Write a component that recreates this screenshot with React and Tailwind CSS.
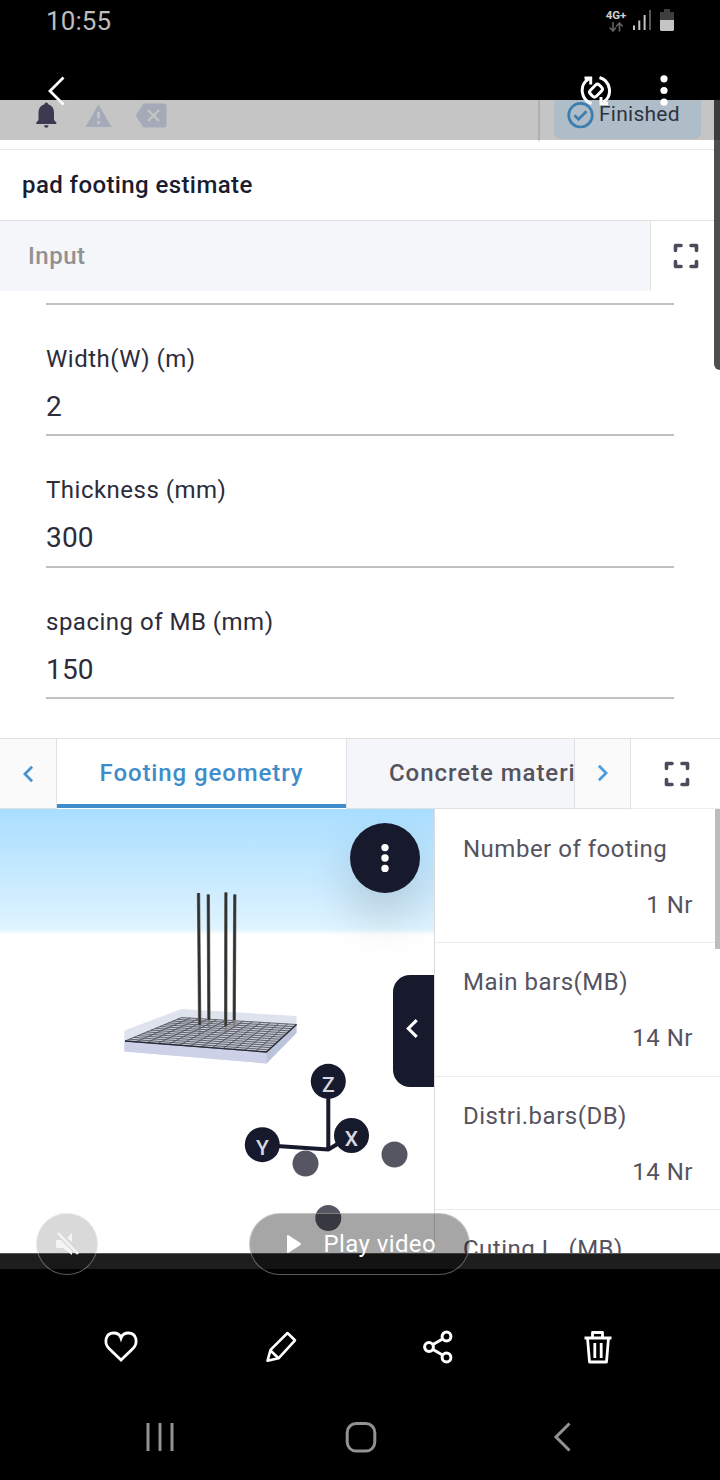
import React from 'react'

const fields = [
  { label: 'Width(W) (m)', value: '2' },
  { label: 'Thickness (mm)', value: '300' },
  { label: 'spacing of MB (mm)', value: '150' },
]

const results = [
  { label: 'Number of footing', value: '1 Nr' },
  { label: 'Main bars(MB)', value: '14 Nr' },
  { label: 'Distri.bars(DB)', value: '14 Nr' },
]

const ExpandIcon = () => (
  <svg width="26" height="26" viewBox="0 0 26 26" fill="none" stroke="#4c4a5b" strokeWidth="3.600" strokeLinejoin="round" strokeLinecap="round">
    <path d="M2.500 7.500V2.500H8M18 2.500H23.500V7.500M23.500 18.500V23.500H18M8 23.500H2.500V18.500" />
  </svg>
)

const Chevron = ({ className, right, width = 3 }) => (
  <svg className={className} viewBox="0 0 12 20" fill="none" stroke="currentColor" strokeWidth={width}>
    <path d={right ? 'M2 2L10 10L2 18' : 'M10 2L2 10L10 18'} />
  </svg>
)

// Status bar and gallery controls, these run slightly over the photo
const PhoneHeader = () => (
  <div className="relative z-10 h-[100px]">
    <div className="flex h-[42px] items-center justify-between pl-[46px] pr-[46px]">
      <span className="text-[26px] leading-none tracking-[0.1px] text-[#bdbdbd]">10:55</span>
      <div className="-mt-[2px] flex items-start">
        <div className="flex w-[22px] flex-col items-center">
          <span className="text-[11.500px] font-bold leading-[12px] text-[#d0d0d0]">4G+</span>
          <svg className="mt-px" width="14" height="10" viewBox="0 0 14 10" fill="none" stroke="#626262" strokeWidth="1.600">
            <path d="M4 0V9M0.700 5.500L4 9L7 5.500M10.500 9.500V1M7.200 4.500L10.500 1L13.700 4.500" />
          </svg>
        </div>
        <svg className="ml-[6px]" width="19" height="22" viewBox="0 0 19 22">
          <path d="M0 16.500H2V21H0ZM5.300 11.500H7.300V21H5.300ZM10.600 6H12.600V21H10.600Z" fill="#c4c4c4" />
          <path d="M16 1H18V21H16Z" fill="#555" />
        </svg>
        <svg className="ml-[8px]" width="14" height="22" viewBox="0 0 14 22">
          <path d="M4 0H10V3H14V11H0V3H4Z" fill="#3e3e3e" />
          <path d="M0 11H14V20.500Q14 22 12.500 22H1.500Q0 22 0 20.500Z" fill="#c4c4c4" />
        </svg>
      </div>
    </div>
    <div className="flex items-start justify-between pl-[47px] pr-[51px] pt-[32px] text-white">
      <svg className="mt-[2px]" width="19" height="30" viewBox="0 0 19 30" fill="none" stroke="currentColor" strokeWidth="2.800">
        <path d="M16.500 1.500L3 15L16.500 28.500" />
      </svg>
      <div className="flex">
        <svg width="32" height="33" viewBox="0 0 32 33" fill="none" stroke="currentColor" strokeWidth="3">
          <path d="M11.500 29.500A13.700 13.700 0 0 1 8.500 5M4.500 4H10.700V10.500" />
          <path d="M19.500 3.500A13.700 13.700 0 0 1 23.500 28M28 29.500H21V23" />
          <rect x="11.800" y="10.300" width="8.400" height="12.600" rx="2.600" transform="rotate(45 16 16.600)" />
        </svg>
        <svg className="ml-[47px]" width="10" height="34" viewBox="0 0 10 34" fill="currentColor">
          <circle cx="5" cy="4.800" r="3.600" />
          <circle cx="5" cy="16.500" r="3.600" />
          <circle cx="5" cy="28.200" r="3.600" />
        </svg>
      </div>
    </div>
  </div>
)

const ToolStrip = () => (
  <div className="flex h-[50px] flex-col border-b border-[#e6e6e6] bg-white">
    <div className="flex h-[40px] bg-[#c5c5c5]">
      <div className="flex flex-1 items-start pl-[36px] pt-[2px]">
        <svg width="21" height="26" viewBox="0 0 21 26" fill="#3c3850">
          <path d="M10.300 0.500Q12 0.500 12.200 2.300Q18 4 18 11V18L20.300 20.500V22H0.300V20.500L2.500 18V11Q2.500 4 8.400 2.300Q8.600 0.500 10.300 0.500ZM8 23.300H12.600Q12.300 25.800 10.300 25.800Q8.300 25.800 8 23.300Z" />
        </svg>
        <svg className="ml-[28px] mt-[2px]" width="27" height="23" viewBox="0 0 27 23">
          <path d="M13.500 0.500L26.500 23H0.500Z" fill="#a4aab7" />
          <path d="M13.500 8V14.500M13.500 17V20" stroke="#c5c5c5" strokeWidth="2.800" />
        </svg>
        <svg className="ml-[23px] mt-px" width="32" height="25" viewBox="0 0 32 25">
          <path d="M8.500 0.500H28.500Q31.500 0.500 31.500 3.500V21.500Q31.500 24.500 28.500 24.500H8.500L0.500 12.500Z" fill="#a4aab7" />
          <path d="M13 7L24 18M24 7L13 18" stroke="#c5c5c5" strokeWidth="2.300" />
        </svg>
      </div>
      <div className="-mb-[2px] w-[2px] bg-black/10" />
      <div className="ml-[14px] mr-[19px] flex h-[39px] w-[147px] items-start rounded-b-[7px] bg-[#afbdc8] pl-[13px] pt-[2px]">
        <svg width="27" height="27" viewBox="0 0 27 27" fill="none" stroke="#3b7eb2" strokeWidth="2.700">
          <circle cx="13.500" cy="13.200" r="11.800" />
          <path d="M7.500 13.200L11.500 17.300L19.500 9.300" />
        </svg>
        <span className="ml-[5px] text-[21px] leading-[25px] tracking-[0.25px] text-[#2c3340]">Finished</span>
      </div>
    </div>
  </div>
)

const InputPanel = () => (
  <div className="h-[588px] bg-white">
    <div className="flex h-[70px] items-center pl-[22px]">
      <h1 className="text-[24px] font-medium leading-none tracking-[0.4px] text-[#1b1c2e]">pad footing estimate</h1>
    </div>
    <div className="flex h-[71px] border-t border-[#e2e2e2]">
      <div className="flex w-[651px] items-center border-r border-[#e2e3e3] bg-[#f5f6fa] pl-[28px] text-[24px] font-medium tracking-[0.5px] text-[#919191]">
        Input
      </div>
      <div className="flex items-center pl-[22px]">
        <ExpandIcon />
      </div>
    </div>
    <div className="ml-[46px] mr-[46px] mt-[12px] border-t-2 border-[#c0c0c0]">
      {fields.map((field) => (
        <div key={field.label} className="flex h-[131.300px] flex-col border-b-2 border-[#c0c0c0] pt-[37px] text-[#2c2c3a]">
          <label className="text-[24px] leading-[34px] tracking-[0.5px]">{field.label}</label>
          <span className="mt-[14px] text-[28px] leading-[34px] tracking-[0.2px]">{field.value}</span>
        </div>
      ))}
    </div>
  </div>
)

const TabBar = () => (
  <div className="flex h-[71px] border-t border-[#e2e2e2] bg-white">
    <div className="flex w-[57px] items-center justify-center border-b border-r border-[#dfe1e5] bg-[#fafafa]">
      <Chevron className="h-[18px] w-[11px] text-[#4a93cc]" />
    </div>
    <div className="mb-px flex w-[289px] items-center justify-center border-b-4 border-[#3f8cca] pt-[3px] text-[24px] font-medium tracking-[0.9px] text-[#3f8cca]">
      Footing geometry
    </div>
    <div className="flex w-[229px] items-center overflow-hidden whitespace-nowrap border-x border-b border-[#dfe1e5] bg-[#f5f6fa] pl-[42px] pb-px text-[24px] font-medium tracking-[0.95px] text-[#55535f]">
      Concrete materials
    </div>
    <div className="flex w-[56px] items-center justify-center border-b border-r border-[#dfe1e5] bg-[#fafafa] pb-px">
      <Chevron right className="h-[18px] w-[11px] text-[#4a9cdd]" />
    </div>
    <div className="flex flex-1 items-center border-b border-[#ececec] pl-[33px]">
      <ExpandIcon />
    </div>
  </div>
)

// Corners of the rebar mat in scene coordinates
const mat = { left: [125, 232], back: [181.5, 208.5], right: [296.5, 215.5], front: [266.5, 243] }

const mix = (a, b, t) => [a[0] + (b[0] - a[0]) * t, a[1] + (b[1] - a[1]) * t]

const RebarMat = () => {
  const steps = Array.from({ length: 14 }, (_, i) => i / 13)
  const lines = steps.flatMap((t) => [
    [mix(mat.left, mat.back, t), mix(mat.front, mat.right, t)],
    [mix(mat.left, mat.front, t), mix(mat.back, mat.right, t)],
  ])
  return (
    <g stroke="#3f424c" strokeWidth="0.75">
      {lines.map(([a, b], i) => (
        <line key={i} x1={a[0]} y1={a[1]} x2={b[0]} y2={b[1]} />
      ))}
    </g>
  )
}

const columnBars = [
  [198.500, 84, 199.700, 216],
  [208.300, 85.500, 208.900, 211],
  [225.900, 83.500, 225.700, 217],
  [234.800, 85.500, 234.200, 211],
]

const Viewer = () => (
  <div className="relative h-[444px] w-[434px] overflow-hidden bg-white">
    <svg width="434" height="444" viewBox="0 0 434 444">
      <defs>
        <linearGradient id="sky" x1="0" y1="0" x2="0" y2="1">
          <stop offset="0" stopColor="#a9deff" />
          <stop offset="0.55" stopColor="#c8eaff" />
          <stop offset="0.95" stopColor="#dff4ff" />
          <stop offset="1" stopColor="#fff" />
        </linearGradient>
      </defs>
      <rect width="434" height="126" fill="url(#sky)" />

      {/* Concrete pad */}
      <path d="M124.300 221.500L181.500 200L296.500 207V224L266.500 254.500L124.300 242.500Z" fill="#dfe3ee" />
      <path d="M124.300 232L266.500 243V254.500L124.300 242.500Z" fill="#ccd1e8" />
      <path d="M266.500 243L296.500 215.500V224L266.500 254.500Z" fill="#bcc4dc" />
      <path d="M125 232L181.500 208.500L296.500 215.500L266.500 243Z" fill="#c4c8d2" />
      <RebarMat />
      <path d="M125 232L266.500 243L296.500 215.500" fill="none" stroke="#292c38" strokeWidth="1.300" />
      {columnBars.map(([x1, y1, x2, y2]) => (
        <g key={x1}>
          <line x1={x2} y1={y2} x2={x2} y2={y2 + 8} stroke="#6d6f72" strokeOpacity="0.6" strokeWidth="2.400" />
          <line x1={x1} y1={y1} x2={x2} y2={y2} stroke="#77756d" strokeWidth="3.400" />
          <line x1={x1} y1={y1} x2={x2} y2={y2} stroke="#2f3130" strokeWidth="2.200" />
        </g>
      ))}

      {/* Axis gizmo */}
      <g fill="#565663">
        <circle cx="305.500" cy="354.500" r="13" />
        <circle cx="394.500" cy="345.500" r="13" />
        <circle cx="328.300" cy="409" r="13" />
      </g>
      <path d="M328.300 272V340.500L262 336M328.300 340.500L351 327" fill="none" stroke="#171a2d" strokeWidth="4" strokeLinejoin="round" />
      <g fill="#171a2d">
        <circle cx="328.300" cy="272.300" r="17.500" />
        <circle cx="262.300" cy="335.700" r="17.500" />
        <circle cx="351.500" cy="326.500" r="17.500" />
      </g>
      <g className="text-[21px] font-medium" fill="#d8d8e0" textAnchor="middle">
        <text x="328.300" y="282.500">Z</text>
        <text x="262.300" y="346">Y</text>
        <text x="351.500" y="336.500">X</text>
      </g>
    </svg>
    <button className="absolute left-[349.500px] top-[14px] flex h-[70px] w-[70px] items-center justify-center rounded-full bg-[#171a2d] shadow-[0_24px_48px_rgba(0,0,0,0.16)]">
      <svg width="8" height="30" viewBox="0 0 8 30" fill="#fff">
        <circle cx="4" cy="4.600" r="3.700" />
        <circle cx="4" cy="15" r="3.700" />
        <circle cx="4" cy="25.400" r="3.700" />
      </svg>
    </button>
    <button className="absolute right-0 top-[166px] flex h-[112px] w-[41.500px] items-center justify-center rounded-l-[17px] bg-[#171a2d] pr-px pb-[6px] text-white">
      <Chevron className="h-[21px] w-[13px]" />
    </button>
  </div>
)

const ResultList = () => (
  <div className="relative h-[444px] flex-1 overflow-hidden border-l border-[#dadada] bg-white pt-px text-[24px] leading-[34px] text-[#55535f]">
    {results.map((row) => (
      <div key={row.label} className="flex h-[133.300px] flex-col border-b border-[#ececec] pl-[28px] pr-[27px] pt-[22px]">
        <span className="tracking-[0.5px]">{row.label}</span>
        <span className="mt-[22px] self-end tracking-[0.5px]">{row.value}</span>
      </div>
    ))}
    <div className="whitespace-pre pl-[28px] pt-[22px] tracking-[0.5px]">Cuting L. (MB)</div>
    <div className="absolute right-0 top-0 h-[140px] w-[5.500px] bg-[#bdbdbd]" />
  </div>
)

const PhotoActions = () => (
  <div className="flex h-[156px] items-center justify-between pl-[103px] pr-[106px] text-white">
    <svg width="36" height="36" viewBox="0 0 36 36" fill="none" stroke="currentColor" strokeWidth="2.800">
      <path d="M18 31L6 19.500C0.500 14 2.500 4 10.500 4C14.500 4 17 6 18 9C19 6 21.500 4 25.500 4C33.500 4 35.500 14 30 19.500Z" />
    </svg>
    <svg className="-ml-[2px]" width="36" height="36" viewBox="0 0 36 36" fill="none" stroke="currentColor" strokeWidth="2.600" strokeLinejoin="round">
      <path d="M25.500 4L33 11.300L16.500 29.300L5.500 31.800L8.500 20.800ZM8.500 21.500L16.500 29.300" />
    </svg>
    <svg className="-ml-[2px]" width="36" height="36" viewBox="0 0 36 36" fill="none" stroke="currentColor" strokeWidth="3">
      <circle cx="8" cy="18" r="4.400" />
      <circle cx="25.500" cy="7.500" r="4.400" />
      <circle cx="25.500" cy="28.500" r="4.400" />
      <path d="M12 15.500L21.500 10M12 20.500L21.500 26" />
    </svg>
    <svg width="32" height="36" viewBox="0 0 32 36" fill="none" stroke="currentColor" strokeWidth="2.800">
      <path d="M2.500 9H29.500M10.500 9V3.500H20.500V9M5.500 9L7.500 33H24.500L26.500 9M12.800 14V29M19.200 14V29" strokeLinejoin="round" />
    </svg>
  </div>
)

const NavBar = () => (
  <div className="-mt-[3px] flex items-start justify-between pl-[146px] pr-[148px] text-[#929292]">
    <svg width="28" height="30" viewBox="0 0 28 30" stroke="currentColor" strokeWidth="3">
      <path d="M2 1V29M14 1V29M26 1V29" />
    </svg>
    <svg className="-ml-[4px]" width="32" height="32" viewBox="0 0 32 32" fill="none" stroke="currentColor" strokeWidth="3">
      <rect x="2.200" y="1.500" width="27.600" height="27.600" rx="9" />
    </svg>
    <svg width="20" height="30" viewBox="0 0 20 30" fill="none" stroke="currentColor" strokeWidth="3">
      <path d="M17.500 1.500L4 15L17.500 28.500" />
    </svg>
  </div>
)

export default function App() {
  return (
    <div className="relative h-[1480px] w-[720px] overflow-hidden bg-black font-[Roboto,sans-serif]">
      <PhoneHeader />
      <ToolStrip />
      <InputPanel />
      <TabBar />
      <div className="flex">
        <Viewer />
        <ResultList />
      </div>
      <div className="h-[16px] border-t border-[#555] bg-[#1e1e1e]" />
      <PhotoActions />
      <NavBar />

      {/* Edge panel handle */}
      <div className="absolute right-0 top-[100px] h-[270px] w-[6px] overflow-hidden rounded-bl-[7px] bg-[#4d4f4f]">
        <div className="h-[40px] bg-[#3c3c3c]" />
      </div>

      {/* Motion photo controls */}
      <div className="absolute left-[35.500px] top-[1212.500px] flex h-[62px] w-[62px] items-center justify-center rounded-full border border-white/35 bg-black/15">
        <svg width="24" height="24" viewBox="0 0 24 24" fill="#f4f4f4">
          <path d="M1 8H6L17 19V23L8 16H1ZM12 6L17 1V10Z" />
          <path d="M3 1L23 22" stroke="#f4f4f4" strokeWidth="2.500" />
        </svg>
      </div>
      <button className="absolute left-[248.500px] top-[1212.500px] flex h-[62px] w-[221px] items-center rounded-full border border-white/35 bg-black/35 pl-[36px] text-[24px] text-white">
        <svg width="16" height="20" viewBox="0 0 16 20" fill="currentColor">
          <path d="M1 2Q1 0.500 2.500 1.300L14.500 9Q15.500 10 14.500 11L2.500 18.700Q1 19.500 1 18Z" />
        </svg>
        <span className="ml-[22px] tracking-[0.4px]">Play video</span>
      </button>
    </div>
  )
}
